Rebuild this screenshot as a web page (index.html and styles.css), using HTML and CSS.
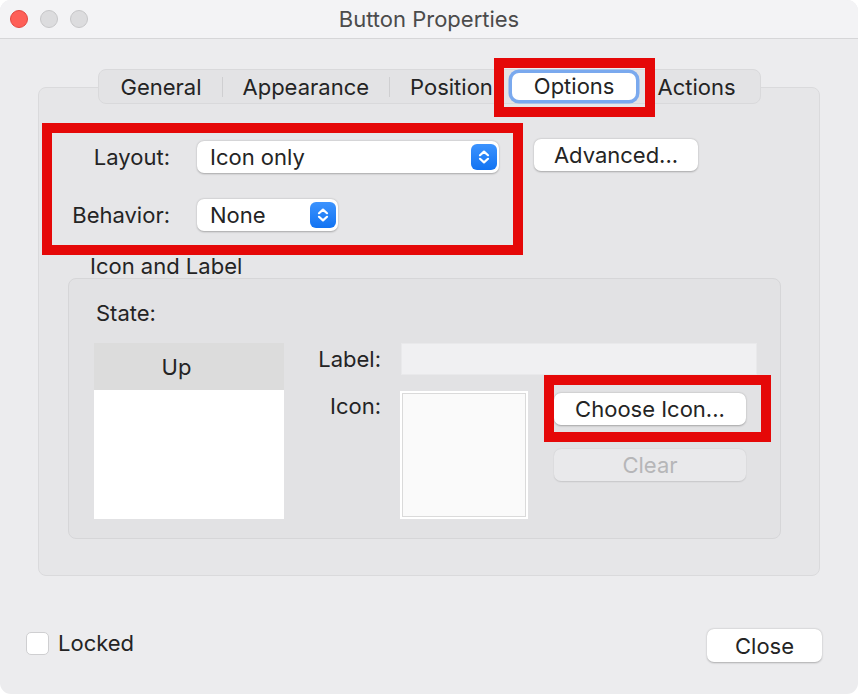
FILE: index.html
```html
<!DOCTYPE html>
<html>
<head>
<meta charset="utf-8">
<link rel="stylesheet" href="styles.css">
</head>
<body>
<div class="window">
  <div class="titlebar">
    <div class="lights">
      <span class="light red"></span>
      <span class="light gray"></span>
      <span class="light gray"></span>
    </div>
    <div class="title">Button Properties</div>
    <div></div>
  </div>
  <div class="main">
    <div class="tabs">
      <div class="tab">General</div>
      <div class="tab">Appearance</div>
      <div class="tab before-sel">Position</div>
      <div class="tab selected annotated">Options</div>
      <div class="tab after-sel">Actions</div>
    </div>
    <div class="panel">
      <div class="top-row">
        <div class="annot-box">
          <div class="label">Layout:</div>
          <div class="popup wide"><span>Icon only</span><span class="stepper"><svg width="26" height="26" viewBox="0 0 26 26"><path d="M9 11.2 L13 7.6 L17 11.2 M9 14.8 L13 18.4 L17 14.8" fill="none" stroke="#fff" stroke-width="2.2" stroke-linecap="round" stroke-linejoin="round"/></svg></span></div>
          <div class="label">Behavior:</div>
          <div class="popup narrow"><span>None</span><span class="stepper"><svg width="26" height="26" viewBox="0 0 26 26"><path d="M9 11.2 L13 7.6 L17 11.2 M9 14.8 L13 18.4 L17 14.8" fill="none" stroke="#fff" stroke-width="2.2" stroke-linecap="round" stroke-linejoin="round"/></svg></span></div>
        </div>
        <div class="btn advanced">Advanced...</div>
      </div>
      <div class="caption">Icon and Label</div>
      <div class="group">
        <div class="state-label">State:</div>
        <div class="group-body">
          <div class="list">
            <div class="list-head">Up</div>
            <div class="list-body"></div>
          </div>
          <div class="fields">
            <div class="flabel">Label:</div>
            <div class="textfield"></div>
            <div class="flabel icon-label">Icon:</div>
            <div class="icon-row">
              <div class="well"></div>
              <div class="icon-btns">
                <div class="btn choose annotated2">Choose Icon...</div>
                <div class="btn clear">Clear</div>
              </div>
            </div>
          </div>
        </div>
      </div>
    </div>
  </div>
  <div class="bottom">
    <label class="check"><span class="box"></span><span>Locked</span></label>
    <div class="btn close">Close</div>
  </div>
</div>
</body>
</html>
```
FILE: styles.css
```css
html, body {
  margin: 0;
  padding: 0;
  background: #ffffff;
}
body {
  font-family: Inter, "Noto Sans", "Liberation Sans", sans-serif;
  font-size: 22px;
  color: #242424;
}
.window {
  width: 858px;
  height: 694px;
  background: #ECECEE;
  border-radius: 11px;
  overflow: hidden;
  display: flex;
  flex-direction: column;
}
.titlebar {
  height: 38px;
  flex: none;
  background: #F3F3F5;
  border-bottom: 1px solid #D6D6D8;
  display: grid;
  grid-template-columns: 1fr auto 1fr;
  align-items: center;
}
.lights {
  display: flex;
  gap: 12px;
  padding-left: 10px;
}
.light {
  width: 16px;
  height: 16px;
  border-radius: 50%;
  display: block;
}
.light.red {
  background: #FE5F57;
  border: 1px solid #E2453F;
}
.light.gray {
  background: #DCDCDE;
  border: 1px solid #C6C6C8;
}
.title {
  color: #4B4B4B;
  font-size: 22px;
}
.main {
  padding: 30px 38px 0 38px;
  display: flex;
  flex-direction: column;
}
.tabs {
  align-self: center;
  margin-left: 1px;
  display: flex;
  height: 33px;
  background: #E3E3E5;
  border: 1px solid #D9D9DB;
  border-radius: 8px;
  position: relative;
  z-index: 2;
  align-items: center;
}
.tab {
  padding: 0 20px 0 21px;
  line-height: 20px;
  position: relative;
}
.tab + .tab::before {
  content: "";
  position: absolute;
  left: 0;
  top: 0;
  bottom: 0;
  width: 1px;
  background: #CFCFD1;
}
.tab.selected::before,
.tab.after-sel::before {
  display: none;
}
.tab.before-sel {
  padding-right: 15px;
}
.tab.selected {
  background: #fff;
  border-radius: 7px;
  height: 27px;
  line-height: 27px;
  padding: 0 22px;
  box-shadow: 0 0 0 3.5px #7AA9EE;
  margin: 0 4px;
}
.tab.after-sel {
  padding: 0 24px 0 17px;
}
.annotated::after {
  content: "";
  position: absolute;
  left: -18px;
  right: -19px;
  top: -15px;
  bottom: -17px;
  border: 10px solid #E50808;
}
.panel {
  margin-top: -17px;
  height: 489px;
  box-sizing: border-box;
  background: #E6E6E8;
  border: 1px solid #DADADC;
  border-radius: 8px;
  padding: 35px 0 0 3px;
  position: relative;
  z-index: 1;
}
.top-row {
  display: flex;
  align-items: flex-start;
}
.annot-box {
  width: 481px;
  height: 132px;
  box-sizing: border-box;
  border: 10px solid #E50808;
  padding-top: 8px;
  display: grid;
  grid-template-columns: 118px auto;
  column-gap: 27px;
  row-gap: 26px;
  align-items: center;
  align-content: start;
}
.label {
  text-align: right;
}
.popup {
  height: 32px;
  background: #fff;
  border-radius: 7px;
  box-shadow: 0 0.5px 2px rgba(0, 0, 0, 0.28);
  display: flex;
  align-items: center;
  justify-content: space-between;
  padding: 0 2px 0 13px;
  box-sizing: border-box;
}
.popup.wide { width: 302px; }
.popup.narrow { width: 141px; }
.stepper {
  width: 26px;
  height: 26px;
  border-radius: 6px;
  background: linear-gradient(#3C93FE, #1273F2);
  display: block;
}
.stepper svg { display: block; }
.btn {
  height: 32px;
  box-sizing: border-box;
  background: #fff;
  border-radius: 7px;
  box-shadow: 0 0.5px 2px rgba(0, 0, 0, 0.28);
  display: flex;
  align-items: center;
  justify-content: center;
}
.advanced {
  width: 164px;
  margin: 16px 0 0 11px;
}
.caption {
  margin: 1px 0 0 48px;
  line-height: 20px;
}
.group {
  margin: 2px 38px 0 26px;
  height: 261px;
  box-sizing: border-box;
  background: #E2E2E4;
  border: 1px solid #D6D6D8;
  border-radius: 8px;
  padding: 23px 0 0 25px;
}
.state-label {
  margin-left: 2px;
  line-height: 22px;
}
.group-body {
  margin-top: 19px;
  display: flex;
  align-items: flex-start;
}
.list {
  width: 190px;
  height: 176px;
  display: flex;
  flex-direction: column;
}
.list-head {
  height: 47px;
  background: #DCDCDC;
  display: flex;
  align-items: center;
  justify-content: center;
  padding-right: 25px;
}
.list-body {
  flex: 1;
  background: #fff;
}
.fields {
  display: grid;
  grid-template-columns: 97px 356px;
  column-gap: 20px;
  row-gap: 16px;
  align-items: start;
}
.flabel {
  text-align: right;
  line-height: 32px;
}
.icon-label {
  line-height: 30px;
}
.textfield {
  height: 32px;
  background: #F0F0F2;
  border: 1px solid #E9E9EB;
  box-sizing: border-box;
}
.icon-row {
  display: flex;
  align-items: flex-start;
  margin-left: -1px;
}
.well {
  width: 128px;
  height: 128px;
  box-sizing: border-box;
  background: #FAFAFA;
  border: 2px solid #fff;
  box-shadow: inset 0 0 0 1px #DADADA;
}
.icon-btns {
  margin: 2px 0 0 26px;
  display: flex;
  flex-direction: column;
  gap: 24px;
}
.choose {
  width: 192px;
  position: relative;
}
.annotated2::after {
  content: "";
  position: absolute;
  left: -10px;
  right: -25px;
  top: -18px;
  bottom: -17px;
  border: 10px solid #E50808;
}
.clear {
  width: 192px;
  background: #E9E9EB;
  color: #B6B6B8;
  box-shadow: 0 0.5px 1.5px rgba(0, 0, 0, 0.12);
}
.bottom {
  margin-top: 53px;
  padding: 0 36px 0 26px;
  display: flex;
  justify-content: space-between;
  align-items: flex-start;
}
.check {
  display: flex;
  align-items: center;
  gap: 9px;
  margin-top: 1px;
}
.box {
  width: 23px;
  height: 23px;
  box-sizing: border-box;
  background: #fff;
  border: 1px solid #CFCFD1;
  border-radius: 5px;
  display: block;
}
.close {
  width: 115px;
  height: 33px;
}
```
